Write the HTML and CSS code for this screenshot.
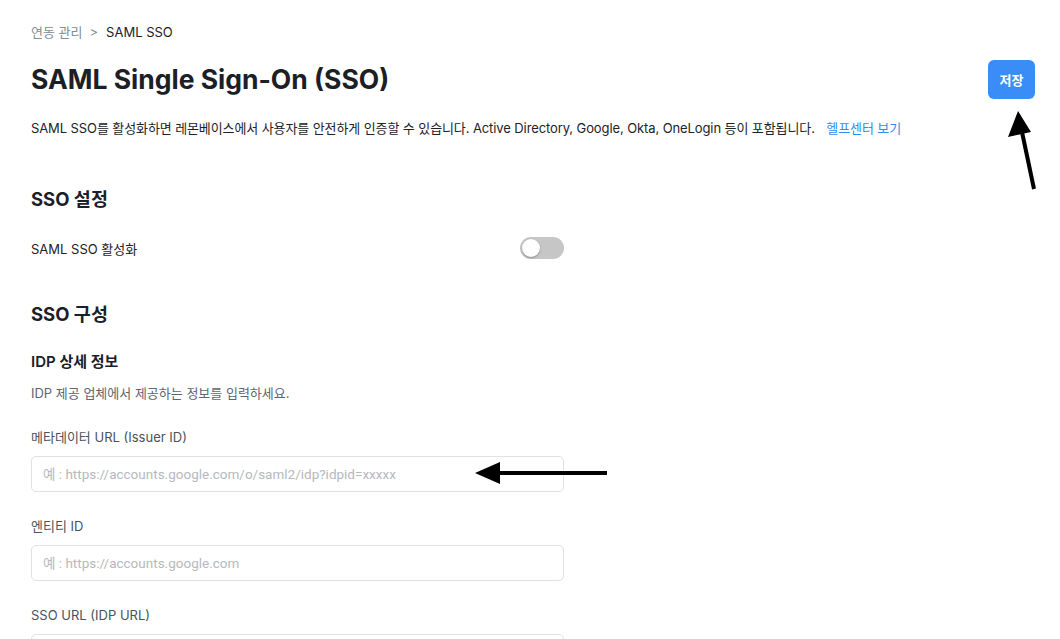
FILE: index.html
```html
<!DOCTYPE html>
<html lang="ko">
<head>
<meta charset="utf-8">
<link rel="stylesheet" href="styles.css">
</head>
<body>
<div class="page">
  <nav class="crumbs"><span class="crumb-link">연동 관리</span><span class="crumb-sep">&gt;</span><span class="crumb-cur">SAML SSO</span></nav>
  <header class="title-row">
    <h1 class="title">SAML Single Sign-On (SSO)</h1>
    <button class="save">저장</button>
  </header>
  <p class="intro">SAML SSO를 활성화하면 레몬베이스에서 사용자를 안전하게 인증할 수 있습니다. Active Directory, Google, Okta, OneLogin 등이 포함됩니다. <a class="help">헬프센터 보기</a></p>

  <section class="form">
    <h2 class="section-title first">SSO 설정</h2>
    <div class="toggle-row">
      <span class="toggle-label">SAML SSO 활성화</span>
      <span class="toggle"><span class="knob"></span></span>
    </div>

    <h2 class="section-title second">SSO 구성</h2>
    <h3 class="sub-title">IDP 상세 정보</h3>
    <p class="sub-desc">IDP 제공 업체에서 제공하는 정보를 입력하세요.</p>

    <div class="field">
      <label class="field-label">메타데이터 URL (Issuer ID)</label>
      <input class="field-input" type="text" placeholder="예 : https://accounts.google.com/o/saml2/idp?idpid=xxxxx">
    </div>
    <div class="field">
      <label class="field-label">엔티티 ID</label>
      <input class="field-input" type="text" placeholder="예 : https://accounts.google.com">
    </div>
    <div class="field">
      <label class="field-label">SSO URL (IDP URL)</label>
      <input class="field-input" type="text">
    </div>
  </section>
</div>

<svg class="arrow arrow-up" width="40" height="82" viewBox="0 0 40 82">
  <line x1="26" y1="79" x2="14" y2="22" stroke="#000" stroke-width="4"/>
  <polygon points="10,1 0,27 23,22" fill="#000"/>
</svg>
<svg class="arrow arrow-left" width="140" height="30" viewBox="0 0 140 30">
  <line x1="134" y1="15" x2="20" y2="15" stroke="#000" stroke-width="4"/>
  <polygon points="2,15 27,4 27,26" fill="#000"/>
</svg>
</body>
</html>
```
FILE: styles.css
```css
* { box-sizing: border-box; }
html, body { margin: 0; padding: 0; background: #fff; }
body {
  font-family: Inter, "Noto Sans CJK KR", "Noto Sans", sans-serif;
  color: #1d2228;
  width: 1060px;
  height: 639px;
  overflow: hidden;
  position: relative;
}
.page { padding: 22px 25px 0 31px; }

.crumbs { display: flex; align-items: center; font-size: 13px; line-height: 20px; height: 20px; }
.crumb-link { color: #858c94; }
.crumb-sep { color: #858c94; margin: 0 8px 0 7px; }
.crumb-cur { color: #1d2228; }

.title-row { display: flex; align-items: center; justify-content: space-between; margin-top: 17px; height: 40px; }
.title { margin: 0; font-size: 26.5px; font-weight: 700; line-height: 36px; color: #1b2027; }
.save {
  width: 47px; height: 39px; border: none; border-radius: 6px;
  background: #3a8cf6; color: #fff; font-family: inherit;
  font-size: 13px; font-weight: 600; padding: 0; margin-top: 0;
}

.intro { margin: 19px 0 0; font-size: 13px; line-height: 20px; color: #1d2228; letter-spacing: -0.1px; }
.help { color: #2e8ef0; margin-left: 8px; }

.form { width: 533px; }
.section-title { margin: 0; font-size: 18.5px; font-weight: 700; line-height: 26px; color: #1b2027; }
.section-title.first { margin-top: 48px; }
.section-title.second { margin-top: 42px; }

.toggle-row { display: flex; align-items: center; justify-content: space-between; margin-top: 25px; height: 22px; }
.toggle-label { font-size: 13px; color: #1d2228; }
.toggle { width: 44px; height: 22px; border-radius: 11px; background: #c6c6c6; position: relative; display: block; }
.knob {
  position: absolute; left: 2px; top: 2px; width: 18px; height: 18px; border-radius: 50%;
  background: #fff; box-shadow: 0 1px 2px rgba(0,0,0,0.3);
}

.sub-title { margin: 24px 0 0; font-size: 15px; font-weight: 600; line-height: 22px; color: #1b2027; }
.sub-desc { margin: 10px 0 0; font-size: 13px; line-height: 20px; color: #5d6670; }

.field { margin-top: 24px; }
.field-label { display: block; font-size: 13px; line-height: 20px; color: #4a525b; }
.field-input {
  display: block; width: 533px; height: 36px; margin-top: 9px;
  border: 1px solid #dfe1e4; border-radius: 5px; padding: 0 11px;
  font-family: Roboto, "Noto Sans CJK KR", sans-serif; font-size: 13.5px; color: #1d2228;
  outline: none; background: #fff;
}
.field-input::placeholder { color: #b5b9be; }

.arrow { position: absolute; }
.arrow-up { left: 1008px; top: 110px; }
.arrow-left { left: 473px; top: 458px; }
```
